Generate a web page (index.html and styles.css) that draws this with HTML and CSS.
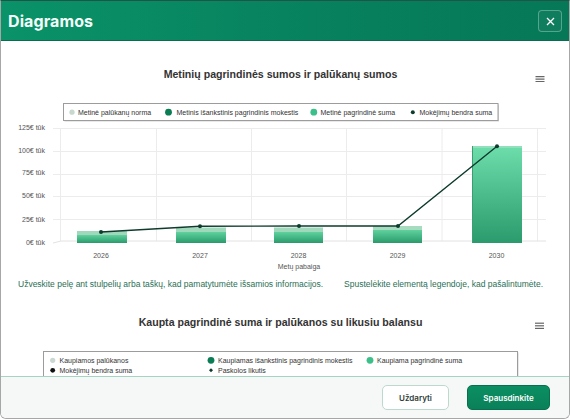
FILE: index.html
```html
<!DOCTYPE html>
<html lang="lt">
<head>
    <meta charset="UTF-8">
    <meta name="viewport" content="width=device-width, initial-scale=1.0">
    <title>Diagramos</title>
    <link rel="stylesheet" href="styles.css">
</head>
<body>
    <div class="modal">
        <header class="modal-header">
            <h1>Diagramos</h1>
            <button class="close-button" aria-label="Uždaryti">
                <svg width="9" height="9" viewBox="0 0 9 9"><path d="M1 1L8 8M8 1L1 8" stroke="#fff" stroke-width="1.3" fill="none"/></svg>
            </button>
        </header>

        <div class="modal-body">
            <!-- Chart 1: yearly principal and interest -->
            <svg class="chart" width="568" height="235" viewBox="1 41 568 235">
                <defs>
                    <linearGradient id="barFront" x1="0" y1="0" x2="0" y2="1">
                        <stop offset="0" stop-color="#5fd19e"/>
                        <stop offset="1" stop-color="#2a9a6b"/>
                    </linearGradient>
                    <linearGradient id="barTall" x1="0" y1="0" x2="0" y2="1">
                        <stop offset="0" stop-color="#6ddcab"/>
                        <stop offset="1" stop-color="#2b9a6c"/>
                    </linearGradient>
                </defs>
                <text class="chart-title" x="280.5" y="77.7" text-anchor="middle">Metinių pagrindinės sumos ir palūkanų sumos</text>
                <g class="menu-icon">
                    <line x1="535.5" y1="76.7" x2="544.5" y2="76.7"/>
                    <line x1="535.5" y1="79.1" x2="544.5" y2="79.1"/>
                    <line x1="535.5" y1="81.5" x2="544.5" y2="81.5"/>
                </g>

                <rect x="64.5" y="104.5" width="434.5" height="17" fill="#d4d4d4"/>
                <rect x="63.5" y="103.5" width="434.5" height="17" fill="#fff" stroke="#9c9c9c" stroke-width="1"/>
                <g class="legend-text">
                    <circle cx="72" cy="112.2" r="2.6" fill="#c7d8cf"/>
                    <text x="78" y="114.7">Metinė palūkanų norma</text>
                    <circle cx="168.5" cy="112.2" r="3.4" fill="#0b7d55"/>
                    <text x="176.5" y="114.7">Metinis išankstinis pagrindinis mokestis</text>
                    <circle cx="313.8" cy="112.2" r="3.4" fill="#3cc08a"/>
                    <text x="320.5" y="114.7">Metinė pagrindinė suma</text>
                    <circle cx="412.8" cy="112.2" r="2" fill="#0e3b2d"/>
                    <text x="419.5" y="114.7">Mokėjimų bendra suma</text>
                </g>

                <g class="grid">
                    <line x1="53" y1="128.5" x2="546" y2="128.5"/>
                    <line x1="53" y1="151.5" x2="546" y2="151.5"/>
                    <line x1="53" y1="174.5" x2="546" y2="174.5"/>
                    <line x1="53" y1="196.5" x2="546" y2="196.5"/>
                    <line x1="53" y1="219.5" x2="546" y2="219.5"/>
                    <line x1="60.5" y1="128.5" x2="60.5" y2="241"/>
                    <line x1="156.5" y1="128.5" x2="156.5" y2="241"/>
                    <line x1="251.5" y1="128.5" x2="251.5" y2="241"/>
                    <line x1="346.5" y1="128.5" x2="346.5" y2="241"/>
                    <line x1="442" y1="128.5" x2="442" y2="241"/>
                    <line x1="537.5" y1="128.5" x2="537.5" y2="241"/>
                </g>
                <path d="M53 243L61 241H546" class="floor"/>

                <g class="axis-text">
                    <text x="45" y="130.3" text-anchor="end">125€ tūk</text>
                    <text x="45" y="152.8" text-anchor="end">100€ tūk</text>
                    <text x="45" y="175.2" text-anchor="end">75€ tūk</text>
                    <text x="45" y="198.3" text-anchor="end">50€ tūk</text>
                    <text x="45" y="221.8" text-anchor="end">25€ tūk</text>
                    <text x="45" y="244.8" text-anchor="end">0€ tūk</text>
                </g>

                <!-- 3d-ish columns: light top face over a gradient front -->
                <g>
                    <rect x="77" y="231" width="50" height="4" fill="#9fd8bb"/>
                    <rect x="77" y="235" width="50" height="8" fill="url(#barFront)"/>
                    <rect x="176" y="227.5" width="50" height="4.5" fill="#9fd8bb"/>
                    <rect x="176" y="232" width="50" height="11" fill="url(#barFront)"/>
                    <rect x="274" y="227.5" width="49" height="4.5" fill="#9fd8bb"/>
                    <rect x="274" y="232" width="49" height="11" fill="url(#barFront)"/>
                    <rect x="373" y="226" width="49" height="4" fill="#a6dbc0"/>
                    <rect x="373" y="230" width="49" height="13" fill="url(#barFront)"/>
                    <rect x="472" y="146" width="50" height="2" fill="#8fe0bb"/>
                    <rect x="472" y="148" width="50" height="95" fill="url(#barTall)"/>
                    <rect x="472" y="146" width="1" height="97" fill="#3c9d72"/>
                </g>

                <polyline class="total-line" points="101,232 200,226.3 299,226 398,226 497,146.3"/>
                <g fill="#0e3b2d">
                    <circle cx="101" cy="232" r="2"/>
                    <circle cx="200" cy="226.3" r="2"/>
                    <circle cx="299" cy="226" r="2"/>
                    <circle cx="398" cy="226" r="2"/>
                    <circle cx="497" cy="146.3" r="2"/>
                </g>

                <g class="axis-text" text-anchor="middle">
                    <text x="101" y="257.5">2026</text>
                    <text x="200" y="257.5">2027</text>
                    <text x="298.5" y="257.5">2028</text>
                    <text x="397.5" y="257.5">2029</text>
                    <text x="496.5" y="257.5">2030</text>
                    <text x="299" y="268.8">Metų pabaiga</text>
                </g>
            </svg>

            <div class="chart-hints">
                <span>Užveskite pelę ant stulpelių arba taškų, kad pamatytumėte išsamios informacijos.</span>
                <span>Spustelėkite elementą legendoje, kad pašalintumėte.</span>
            </div>

            <!-- Chart 2: cumulative principal, interest and balance -->
            <svg class="chart" width="568" height="128" viewBox="1 292 568 128">
                <text class="chart-title" x="280.5" y="326.4" text-anchor="middle">Kaupta pagrindinė suma ir palūkanos su likusiu balansu</text>
                <g class="menu-icon">
                    <line x1="535" y1="323.2" x2="544" y2="323.2"/>
                    <line x1="535" y1="325.8" x2="544" y2="325.8"/>
                    <line x1="535" y1="328.4" x2="544" y2="328.4"/>
                </g>

                <rect x="44.5" y="352.5" width="474" height="40" fill="#d4d4d4"/>
                <rect x="43.5" y="351.5" width="474" height="40" fill="#fff" stroke="#9c9c9c" stroke-width="1"/>
                <g class="legend-text">
                    <circle cx="52.7" cy="360.3" r="2.6" fill="#cbd8d1"/>
                    <text x="59.5" y="362.8">Kaupiamos palūkanos</text>
                    <circle cx="211" cy="360.3" r="3.4" fill="#0b7d55"/>
                    <text x="218" y="362.8">Kaupiamas išankstinis pagrindinis mokestis</text>
                    <circle cx="370" cy="360.3" r="3.4" fill="#3cc08a"/>
                    <text x="377" y="362.8">Kaupiama pagrindinė suma</text>
                    <circle cx="52.7" cy="370.3" r="2.4" fill="#111"/>
                    <text x="59.5" y="372.8">Mokėjimų bendra suma</text>
                    <path d="M211 368.3L213 370.3L211 372.3L209 370.3Z" fill="#0e3b2d"/>
                    <text x="218" y="372.8">Paskolos likutis</text>
                </g>
            </svg>
        </div>

        <footer class="modal-footer">
            <button class="btn btn-light">Uždaryti</button>
            <button class="btn btn-primary">Spausdinkite</button>
        </footer>
    </div>
</body>
</html>
```

FILE: styles.css
```css
body {
    margin: 0;
    background: #fff;
    font-family: Inter, "Liberation Sans", sans-serif;
}
.modal {
    height: 419px;
    box-sizing: border-box;
    display: flex;
    flex-direction: column;
    border: 1px solid #a7a7a7;
    border-top-color: #1f5446;
    border-radius: 0 0 6px 6px;
    overflow: hidden;
    background: #fff;
}
.modal-header {
    height: 40px;
    flex-shrink: 0;
    display: flex;
    align-items: center;
    justify-content: space-between;
    padding: 0 7px 0 7px;
    background: linear-gradient(90deg, #0a9268, #07805d 60%, #067857);
    border-bottom: 1px solid #0b6b4f;
    box-sizing: border-box;
}
.modal-header h1 {
    margin: 0;
    color: #f4fffa;
    font-size: 16px;
    font-weight: 700;
    letter-spacing: 0.1px;
}
.close-button {
    width: 24px;
    height: 22px;
    padding: 0;
    display: flex;
    align-items: center;
    justify-content: center;
    background: rgba(255, 255, 255, 0.04);
    border: 1px solid rgba(255, 255, 255, 0.3);
    border-radius: 4px;
    margin-top: 1px;
}
.modal-body {
    flex: 1;
    min-height: 0;
    overflow: hidden;
}
.chart {
    display: block;
    font-family: "Liberation Sans", Arial, sans-serif;
}
.chart-title {
    font-size: 10.6px;
    font-weight: 700;
    fill: #333;
}
.menu-icon line {
    stroke: #666;
    stroke-width: 1.2;
}
.legend-text text {
    font-size: 7px;
    fill: #333;
}
.axis-text text {
    font-size: 7px;
    fill: #555;
}
.grid line {
    stroke: #ececec;
    stroke-width: 1;
}
.floor {
    stroke: #e2e2e2;
    fill: none;
}
.total-line {
    fill: none;
    stroke: #0e3b2d;
    stroke-width: 1.4;
}
.chart-hints {
    height: 16px;
    display: flex;
    align-items: center;
    justify-content: space-between;
    padding: 0 26px 0 17px;
    font-family: "Liberation Sans", Arial, sans-serif;
    font-size: 8.5px;
    color: #2a6f56;
}
.modal-footer {
    height: 42px;
    flex-shrink: 0;
    box-sizing: border-box;
    display: flex;
    justify-content: flex-end;
    align-items: flex-start;
    gap: 18px;
    padding: 8px 19px 0 0;
    background: #f6f8f8;
    border-top: 1px solid #a6d4c2;
}
.btn {
    height: 25px;
    border-radius: 5px;
    font-family: Inter, "Liberation Sans", sans-serif;
    font-size: 8px;
    font-weight: 600;
    padding: 0;
}
.btn-light {
    width: 67px;
    background: #fff;
    color: #2c3d37;
    border: 1px solid #bcd9ce;
}
.btn-primary {
    width: 83px;
    background: linear-gradient(180deg, #0b8f62, #0a8059);
    color: #fff;
    border: 1px solid #08704e;
}
```
